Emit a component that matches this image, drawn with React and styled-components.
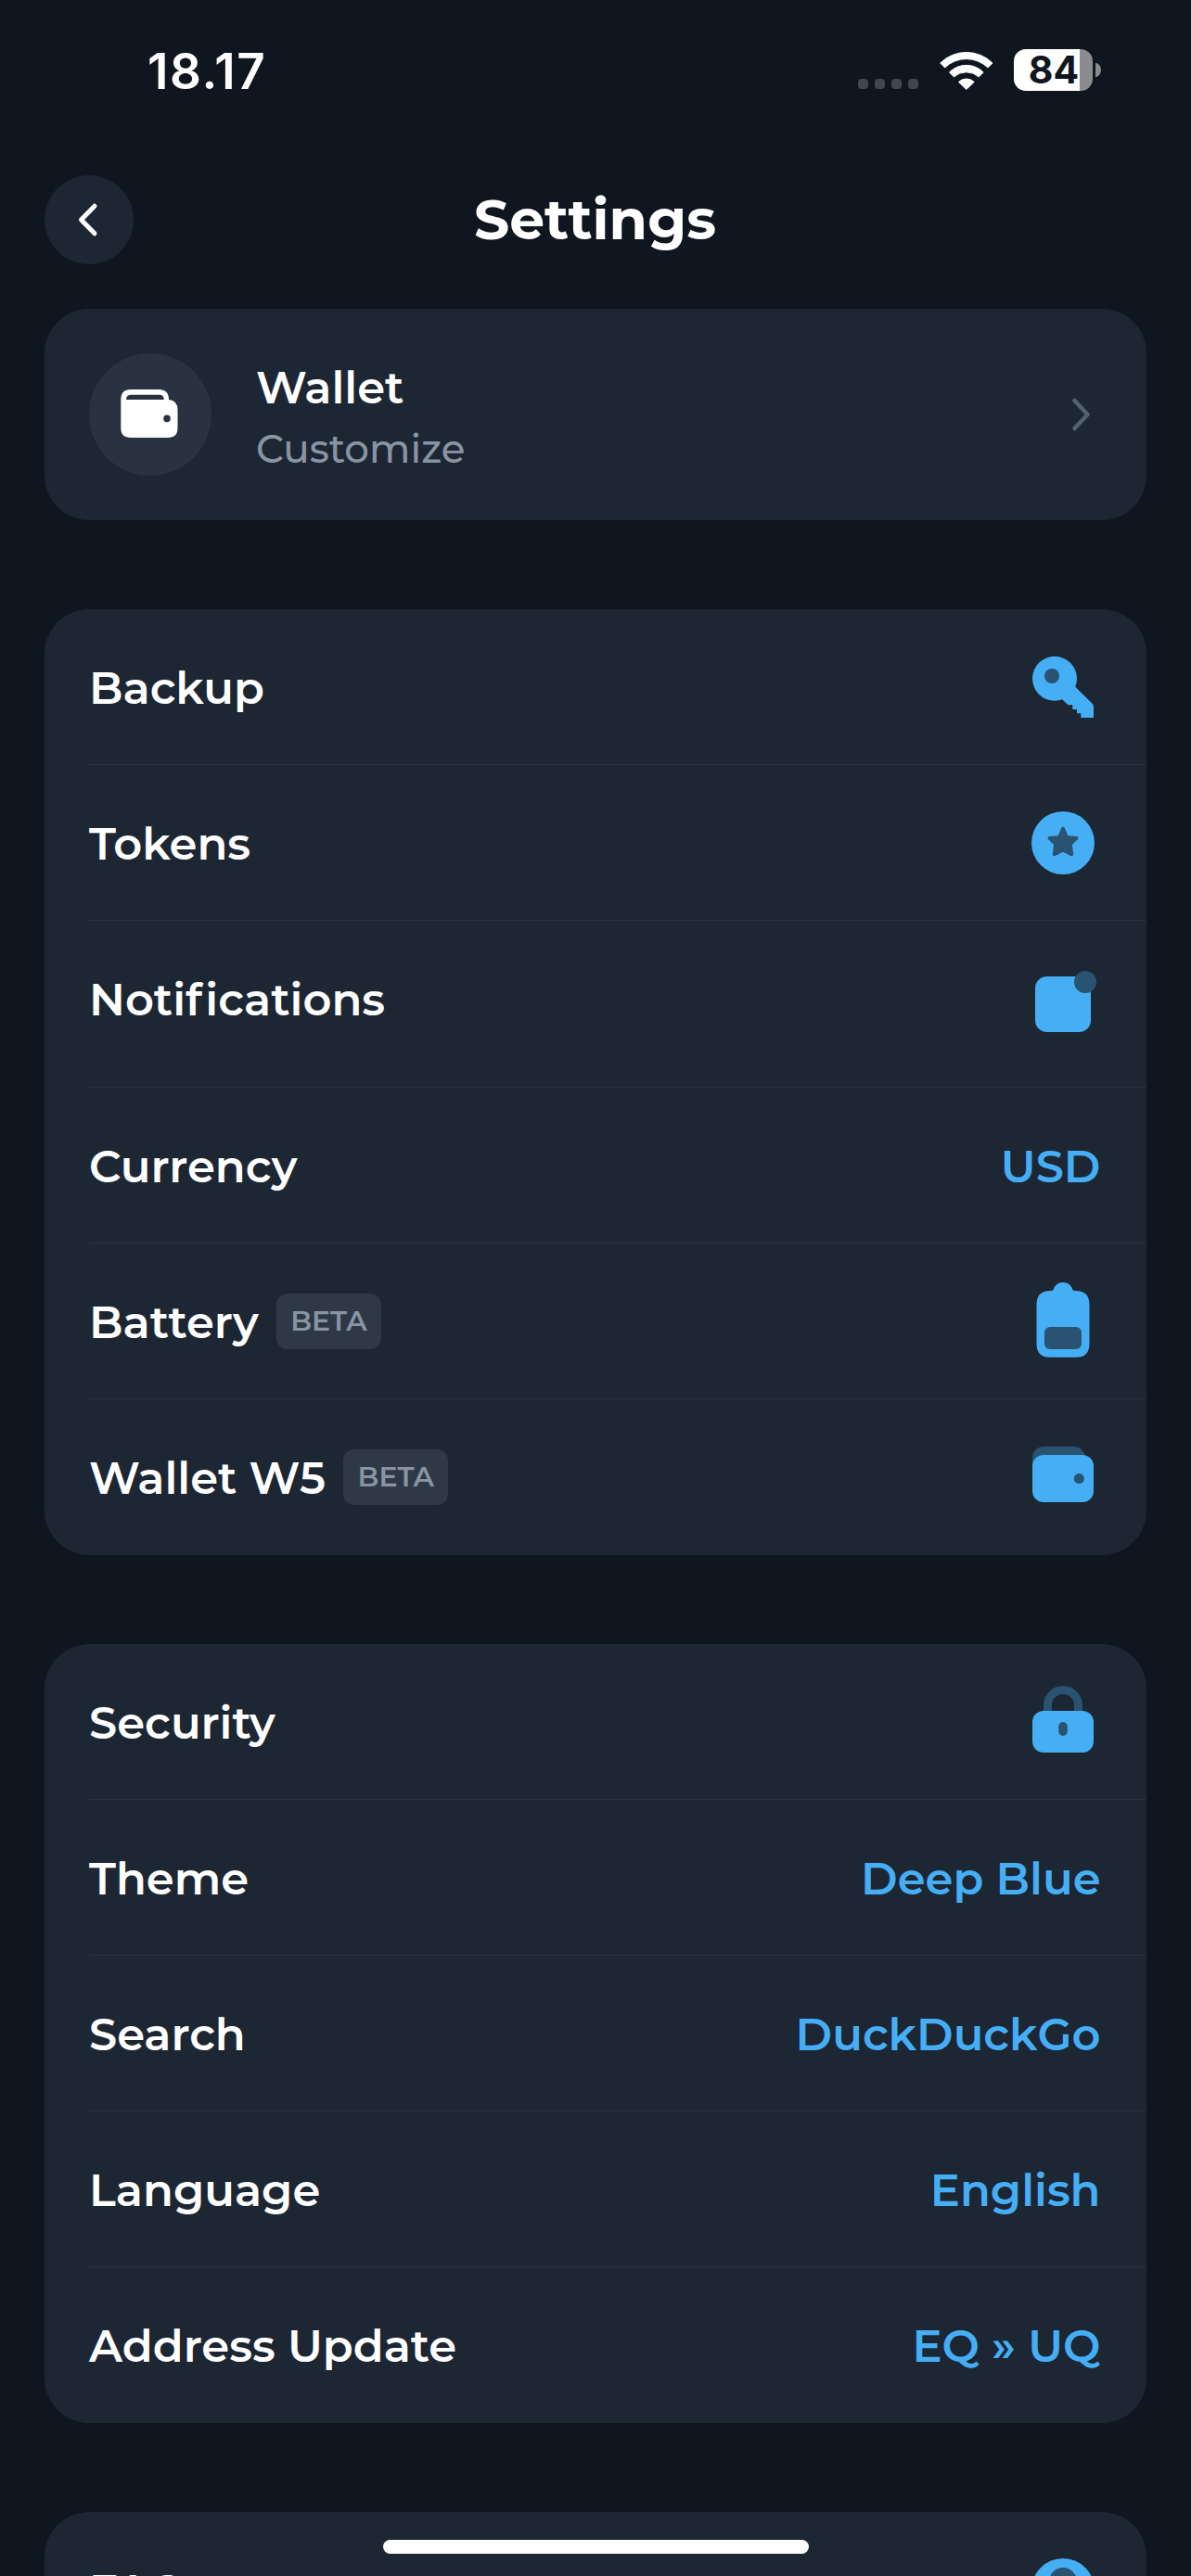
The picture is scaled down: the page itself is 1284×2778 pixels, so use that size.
import React from 'react';
import styled, { createGlobalStyle } from 'styled-components';

const c = {
  page: '#10161f',
  card: '#1d2633',
  tint: '#2e3847',
  avatar: '#2a3241',
  line: 'rgba(194, 218, 255, 0.065)',
  text: '#ffffff',
  secondary: '#8994a3',
  tertiary: '#556170',
  blue: '#45aef5',
  blueDim: '#2a5271',
};

const GlobalStyle = createGlobalStyle`
  body {
    margin: 0;
    background: ${c.page};
    color: ${c.text};
    font-family: Montserrat, Inter, "Open Sans", sans-serif;
  }
  *, *::before, *::after { box-sizing: border-box; }
`;

const Screen = styled.div`
  position: relative;
  width: 1284px;
  height: 2778px;
  overflow: hidden;
  background: ${c.page};
`;

const StatusBar = styled.header`
  display: flex;
  align-items: center;
  justify-content: space-between;
  height: 151px;
  padding: 0 97px 0 159px;
`;

const Time = styled.span`
  font: 600 53px/60px Inter, "Open Sans", sans-serif;
  letter-spacing: 1.6px;
  padding-top: 3px;
`;

const Indicators = styled.div`
  display: flex;
  align-items: center;
  height: 45px;
`;

const Dots = styled.div`
  display: flex;
  gap: 7px;
  margin: 30px 18px 0 0;
`;

const Dot = styled.i`
  width: 11px;
  height: 11px;
  border-radius: 4px;
  background: #43464d;
`;

const WifiMark = styled.svg`
  width: 58px;
  height: 42px;
  margin: 0 22.5px 0 5px;
`;

const Battery = styled.div`
  display: flex;
  align-items: center;
  justify-content: center;
  width: 85px;
  height: 45px;
  padding-left: 1px;
  border-radius: 13px;
  background: linear-gradient(90deg, #fff 71px, #8a8c90 71px);
  color: ${c.page};
  font: 700 41px/45px Inter, "Open Sans", sans-serif;
`;

const BatteryTip = styled.i`
  width: 6px;
  height: 15px;
  margin-left: 3px;
  border-radius: 0 6px 6px 0 / 0 7.5px 7.5px 0;
  background: #8a8c90;
`;

const NavBar = styled.nav`
  display: grid;
  grid-template-columns: 96px 1fr 96px;
  align-items: center;
  margin-top: 38px;
  padding: 0 48px;
`;

const BackButton = styled.button`
  width: 96px;
  height: 96px;
  padding: 0;
  border: 0;
  border-radius: 50%;
  background: ${c.card};

  svg { display: block; }
`;

const Title = styled.h1`
  margin: 0;
  padding-right: 1px;
  text-align: center;
  font-size: 60px;
  line-height: 72px;
  font-weight: 700;
`;

const Content = styled.main`
  display: flex;
  flex-direction: column;
  gap: 96px;
  padding: 48px;
`;

const Card = styled.section`
  border-radius: 48px;
  background: ${c.card};
`;

const WalletCard = styled(Card)`
  display: flex;
  align-items: center;
  height: 228px;
  padding: 0 48px;
`;

const Avatar = styled.div`
  width: 132px;
  height: 132px;
  border-radius: 50%;
  background: ${c.avatar};

  svg { display: block; }
`;

const WalletText = styled.div`
  display: flex;
  flex-direction: column;
  flex: 1;
  margin-left: 48px;
  padding-top: 2px;
`;

const WalletName = styled.strong`
  font-size: 48px;
  line-height: 72px;
  font-weight: 600;
`;

const WalletHint = styled.span`
  font-size: 42px;
  line-height: 60px;
  font-weight: 500;
  color: ${c.secondary};
`;

const Row = styled.div`
  display: flex;
  align-items: flex-start;
  height: ${(p) => (p.$tall ? 180 : 168)}px;
  margin-left: 48px;
  padding: 48px 48px 0 0;
  border-bottom: 1px solid ${c.line};

  &:last-child { border-bottom: 0; }
`;

const Label = styled.span`
  padding-top: 1px;
  font-size: 48px;
  line-height: 72px;
  font-weight: 600;
  white-space: nowrap;
`;

const Loose = styled.span`
  letter-spacing: 3.5px;
`;

const Badge = styled.span`
  height: 60px;
  margin: 6px 0 0 19px;
  padding: 0 15px 0 15.5px;
  border-radius: 12px;
  background: ${c.tint};
  color: ${c.secondary};
  font-size: 30px;
  line-height: 60px;
  font-weight: 600;
`;

const Value = styled(Label)`
  margin-left: auto;
  padding-right: 1.5px;
  color: ${c.blue};
`;

const IconSlot = styled.div`
  width: 84px;
  height: 84px;
  margin: ${(p) => (p.$tall ? 0 : -6)}px 0 0 auto;

  svg { display: block; }
`;

const HomeIndicator = styled.div`
  position: absolute;
  bottom: 24px;
  left: 413px;
  width: 459px;
  height: 15px;
  border-radius: 8px;
  background: #fff;
`;

const Icon = ({ children }) => (
  <svg width="84" height="84" viewBox="0 0 84 84" fill={c.blue}>{children}</svg>
);

const KeyIcon = () => (
  <Icon>
    <circle cx="33" cy="32.8" r="24" />
    <path d="M55.3 41.7 73.3 59.5Q75 61.2 75 63.5V75H61.3V70.3H57V66H52.3V61.3H49Q47.4 61.3 46.3 60.2L40 54Z" />
    <circle cx="30" cy="30" r="8" fill={c.blueDim} />
  </Icon>
);

const StarIcon = () => (
  <Icon>
    <circle cx="42" cy="42" r="34" />
    <path
      d="M42 26.7 45.8 36.1 56.4 36.9 49.8 43.1 51.2 54.2 42 49.5 32.8 54.2 34.2 43.1 27.6 36.9 38.2 36.1Z"
      fill={c.blueDim} stroke={c.blueDim} strokeWidth="4" strokeLinejoin="round"
    />
  </Icon>
);

const BellIcon = () => (
  <Icon>
    <rect x="12" y="12" width="60" height="60" rx="12.5" />
    <circle cx="66" cy="18" r="12" fill={c.blueDim} />
  </Icon>
);

const BatteryIcon = () => (
  <Icon>
    <path d="M28.5 9Q31.4 9 31.6 8A10.7 10.7 0 0 1 52.4 8Q52.6 9 55.5 9C66 9 70.500 14 70.500 24.500V65.500C70.500 76 66 80.800 55.500 80.800H28.500C18 80.800 13.500 76 13.500 65.500V24.500C13.500 14 18 9 28.500 9Z" />
    <rect x="22" y="48" width="40" height="24" rx="6" fill={c.blueDim} />
  </Icon>
);

const WalletIcon = () => (
  <Icon>
    <path d="M9 30V21A12 12 0 0 1 21 9H54Q63 9.5 66 19V30Z" fill={c.blueDim} />
    <rect x="9" y="18" width="66" height="51" rx="12" />
    <circle cx="59.3" cy="43.5" r="5.5" fill={c.blueDim} />
  </Icon>
);

const LockIcon = () => (
  <Icon>
    <path d="M25.5 32V24A16.5 16.5 0 0 1 58.5 24V32" fill="none" stroke={c.blueDim} strokeWidth="9" />
    <rect x="9" y="30" width="66" height="45" rx="12" />
    <rect x="37.2" y="42" width="9.6" height="15" rx="4.8" fill={c.blueDim} />
  </Icon>
);

const HelpIcon = () => (
  <Icon>
    <circle cx="42" cy="42" r="34" />
    <circle cx="42" cy="33" r="15" fill={c.blueDim} />
  </Icon>
);

const groups = [
  [
    { label: 'Backup', icon: KeyIcon },
    { label: 'Tokens', icon: StarIcon },
    { label: <>Noti<Loose>f</Loose>ications</>, icon: BellIcon, tall: true },
    { label: 'Currency', value: 'USD' },
    { label: 'Battery', badge: 'BETA', icon: BatteryIcon },
    { label: 'Wallet W5', badge: 'BETA', icon: WalletIcon },
  ],
  [
    { label: 'Security', icon: LockIcon },
    { label: 'Theme', value: 'Deep Blue' },
    { label: 'Search', value: 'DuckDuckGo' },
    { label: 'Language', value: 'English' },
    { label: 'Address Update', value: 'EQ » UQ' },
  ],
  [{ label: 'FAQ', icon: HelpIcon }],
];

function SettingRow({ label, badge, value, icon: RowIcon, tall }) {
  return (
    <Row $tall={tall}>
      <Label>{label}</Label>
      {badge && <Badge>{badge}</Badge>}
      {value && <Value>{value}</Value>}
      {RowIcon && <IconSlot $tall={tall}><RowIcon /></IconSlot>}
    </Row>
  );
}

export default function App() {
  return (
    <>
      <GlobalStyle />
      <Screen>
        <StatusBar>
          <Time>18.17</Time>
          <Indicators>
            <Dots><Dot /><Dot /><Dot /><Dot /></Dots>
            <WifiMark viewBox="0 0 58 42" fill="#fff" stroke="#fff" strokeWidth="1" strokeLinejoin="round">
              <path d="M.7 13A40 40 0 0 1 57 13L52 17.9A33.5 33.5 0 0 0 5.6 17.9Z" />
              <path d="M10.5 23A25.8 25.8 0 0 1 47.2 23L42.2 27.9A20 20 0 0 0 15.5 27.9Z" />
              <path d="M20.5 33.4A12 12 0 0 1 37.2 33.4L28.85 41.4Z" />
            </WifiMark>
            <Battery>84</Battery>
            <BatteryTip />
          </Indicators>
        </StatusBar>

        <NavBar>
          <BackButton aria-label="Back">
            <svg width="96" height="96" viewBox="0 0 96 96" fill="none" stroke="#fff" strokeWidth="5" strokeLinecap="round" strokeLinejoin="round">
              <path d="M54 33.2 39.5 48 54 62.8" />
            </svg>
          </BackButton>
          <Title>Settings</Title>
        </NavBar>

        <Content>
          <WalletCard>
            <Avatar>
              <svg width="132" height="132" viewBox="0 0 132 132">
                <path
                  fill="#fff" fillRule="evenodd"
                  d="M45 39H75Q86 39 86 50Q95.5 51 95.5 61V80.5Q95.5 91 85 91H45Q34.3 91 34.3 80.5V50Q34.3 39 45 39ZM45.5 44.8Q40 44.8 40 50H80.8Q80.8 44.8 75.5 44.8ZM87.8 70.4A3.8 3.8 0 1 0 80.2 70.4A3.8 3.8 0 1 0 87.8 70.4Z"
                />
              </svg>
            </Avatar>
            <WalletText>
              <WalletName>Wallet</WalletName>
              <WalletHint>Customize</WalletHint>
            </WalletText>
            <svg width="48" height="48" viewBox="0 0 48 48" fill="none" stroke={c.tertiary} strokeWidth="4.5" strokeLinecap="round" strokeLinejoin="round">
              <path d="M18.5 9 32.5 24 18.5 39" />
            </svg>
          </WalletCard>

          {groups.map((rows, i) => (
            <Card key={i}>
              {rows.map((row, j) => <SettingRow key={j} {...row} />)}
            </Card>
          ))}
        </Content>

        <HomeIndicator />
      </Screen>
    </>
  );
}
